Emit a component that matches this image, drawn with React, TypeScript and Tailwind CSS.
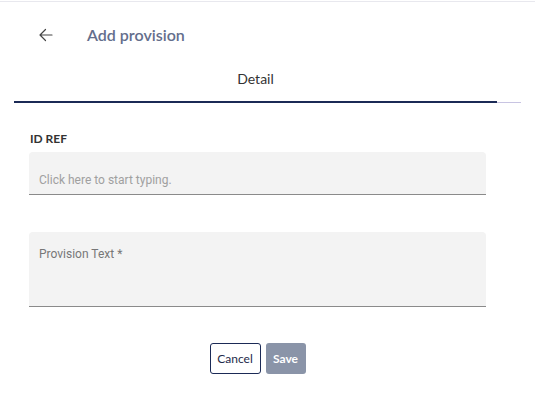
import React from "react";

export default function App() {
  return (
    <div className="w-[535px] h-[411px] bg-white relative overflow-hidden" style={{ fontFamily: "Lato, 'Liberation Sans', sans-serif" }}>
      <div className="h-[1px] mt-[1px] bg-[#e8e8ee]" />
      <div className="flex items-center h-[32px] mt-[17px] pl-[38px]">
        <svg width="16" height="16" viewBox="0 0 16 16" fill="none" stroke="#444" strokeWidth="1.2" strokeLinecap="round" strokeLinejoin="round">
          <path d="M14 8H2M7.5 2.5L2 8l5.5 5.5" />
        </svg>
        <span className="ml-[33px] text-[16px] font-semibold text-[#646e8c]">Add provision</span>
      </div>
      <div className="ml-[14px] w-[507px] mt-[12px] border-b border-[#c8c4e2] relative">
        <div className="w-[483px] h-[40px] pt-[7px] leading-[18px] text-center text-[14px] text-[#333] border-b-2 border-[#1b2a56] -mb-[1px]">
          Detail
        </div>
      </div>
      <div className="ml-[30px] mt-[28px] text-[12px] font-bold text-[#333] leading-[16px]">ID REF</div>
      <div className="ml-[29px] mt-[5px] w-[457px] h-[43px] bg-[#f3f3f3] rounded-t-[4px] border-b border-[#8a8a8a] flex items-end pb-[5px] pl-[10px]" style={{ fontFamily: "Roboto, sans-serif" }}>
        <span className="text-[12px] text-[#a0a0a0]">Click here to start typing.</span>
      </div>
      <div className="ml-[29px] mt-[37px] w-[457px] h-[75px] bg-[#f3f3f3] rounded-t-[4px] border-b border-[#8a8a8a] pt-[9px] pl-[10px]" style={{ fontFamily: "Roboto, sans-serif" }}>
        <span className="text-[12px] text-[#777]">Provision Text *</span>
      </div>
      <div className="ml-[29px] w-[457px] flex justify-center gap-[5px] mt-[36px]">
        <button className="w-[51px] h-[31px] border border-[#1b2a56] rounded-[3px] text-[12px] text-[#1e2a4a] bg-white">Cancel</button>
        <button className="w-[40px] h-[31px] rounded-[3px] text-[12px] font-bold text-white bg-[#8a94a8]">Save</button>
      </div>
    </div>
  );
}
